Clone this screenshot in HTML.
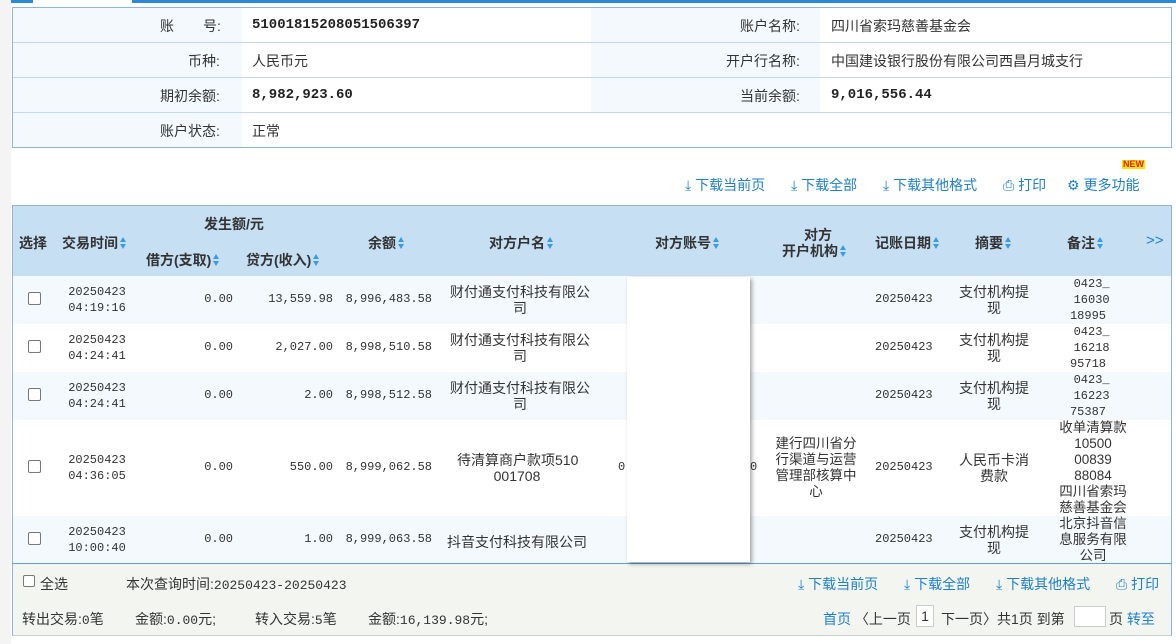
<!DOCTYPE html>
<html><head><meta charset="utf-8"><style>
*{margin:0;padding:0;box-sizing:border-box}
body{width:1176px;height:644px;background:#fff;font-family:"Liberation Sans","WenQuanYi Zen Hei","Noto Sans CJK SC",sans-serif;font-size:14px;color:#333;position:relative;overflow:hidden}
.a{position:absolute;white-space:nowrap}
.mono{font-family:"Liberation Mono","WenQuanYi Zen Hei",monospace;font-size:12px}
.b{color:#1e7fd0}
.th{font-weight:bold;color:#333;font-size:14px}
.s{display:inline-block;width:6px;height:12px;vertical-align:-1px;margin-left:2px;position:relative}
.s:before,.s:after{content:"";position:absolute;left:0;border-left:3px solid transparent;border-right:3px solid transparent}
.s:before{top:0;border-bottom:5px solid #3b9be0}
.s:after{bottom:0;border-top:5px solid #3b9be0}
.cb{position:absolute;width:13px;height:13px;border:1px solid #777;border-radius:2px;background:#fff}
.c{text-align:center;line-height:16px}
.r{text-align:right}
.v{font-size:14px;font-weight:bold;color:#222}
.ft .mono{font-size:13px}
</style></head><body>
<div class="a" style="left:0;top:0;width:11px;height:644px;background:#f4f4f4"></div>
<div class="a" style="left:11px;top:0;width:22px;height:3px;background:#2b8ad6"></div>
<div class="a" style="left:132px;top:0;width:1044px;height:3px;background:#2b8ad6"></div>

<div class="a" style="left:12px;top:7px;width:1160px;height:141px;border:1px solid #8fb4de;background:#fff"></div>
<div class="a" style="left:13px;top:8px;width:229px;height:139px;background:#f4f9fd"></div>
<div class="a" style="left:591px;top:8px;width:229px;height:104px;background:#f4f9fd"></div>
<div class="a" style="left:13px;top:42px;width:1158px;height:1px;background:#c5d9ee"></div>
<div class="a" style="left:13px;top:77px;width:1158px;height:1px;background:#c5d9ee"></div>
<div class="a" style="left:13px;top:112px;width:1158px;height:1px;background:#c5d9ee"></div>
<div class="a" style="left:160px;top:16px">账</div>
<div class="a" style="left:203px;top:16px">号:</div>
<div class="a mono v" style="left:252px;top:17px">51001815208051506397</div>
<div class="a" style="left:188px;top:51px">币种:</div>
<div class="a" style="left:252px;top:51px">人民币元</div>
<div class="a" style="left:160px;top:86px">期初余额:</div>
<div class="a mono v" style="left:252px;top:87px">8,982,923.60</div>
<div class="a" style="left:160px;top:121px">账户状态:</div>
<div class="a" style="left:252px;top:121px">正常</div>
<div class="a" style="left:740px;top:16px">账户名称:</div>
<div class="a" style="left:831px;top:16px">四川省索玛慈善基金会</div>
<div class="a" style="left:726px;top:51px">开户行名称:</div>
<div class="a" style="left:831px;top:51px">中国建设银行股份有限公司西昌月城支行</div>
<div class="a" style="left:740px;top:86px">当前余额:</div>
<div class="a mono v" style="left:831px;top:87px">9,016,556.44</div>

<div class="a b" style="left:685px;top:175px">⤓ 下载当前页</div>
<div class="a b" style="left:791px;top:175px">⤓ 下载全部</div>
<div class="a b" style="left:883px;top:175px">⤓ 下载其他格式</div>
<div class="a b" style="left:1003px;top:175px">⎙ 打印</div>
<div class="a b" style="left:1067px;top:175px">⚙ 更多功能</div>
<div class="a" style="left:1122px;top:160px;font-size:9px;font-weight:bold;color:#e02020;background:#ffe000;line-height:9px;padding:0 1px">NEW</div>

<div class="a" style="left:12px;top:205px;width:1160px;height:431px;border:1px solid #8fb4de;border-bottom:1px solid #ccc"></div>
<div class="a" style="left:13px;top:206px;width:1158px;height:70px;background:#c6dff3"></div>
<div class="a" style="left:13px;top:276px;width:1158px;height:48px;background:#f4f9fd"></div>
<div class="a" style="left:13px;top:372px;width:1158px;height:48px;background:#f4f9fd"></div>
<div class="a" style="left:13px;top:516px;width:1158px;height:48px;background:#f4f9fd"></div>
<div class="a" style="left:12px;top:563px;width:1160px;height:1px;background:#5aa0e0"></div>
<div class="a" style="left:13px;top:564px;width:1158px;height:71px;background:#f3f6f0"></div>

<div class="a th" style="left:19px;top:233px">选择</div>
<div class="a th" style="left:62px;top:233px">交易时间<span class="s"></span></div>
<div class="a th" style="left:204px;top:214px">发生额/元</div>
<div class="a th" style="left:146px;top:250px">借方(支取)<span class="s"></span></div>
<div class="a th" style="left:246px;top:250px">贷方(收入)<span class="s"></span></div>
<div class="a th" style="left:368px;top:233px">余额<span class="s"></span></div>
<div class="a th" style="left:489px;top:233px">对方户名<span class="s"></span></div>
<div class="a th" style="left:655px;top:233px">对方账号<span class="s"></span></div>
<div class="a th" style="left:804px;top:225px">对方</div>
<div class="a th" style="left:782px;top:241px">开户机构<span class="s"></span></div>
<div class="a th" style="left:875px;top:233px">记账日期<span class="s"></span></div>
<div class="a th" style="left:975px;top:233px">摘要<span class="s"></span></div>
<div class="a th" style="left:1067px;top:233px">备注<span class="s"></span></div>
<div class="a b" style="left:1146px;top:232px;font-size:15px">&gt;&gt;</div>

<div class="cb" style="left:28px;top:292px"></div>
<div class="a mono c" style="left:60px;top:284px;width:74px">20250423<br>04:19:16</div>
<div class="a mono r" style="left:160px;top:292px;width:73px">0.00</div>
<div class="a mono r" style="left:250px;top:292px;width:83px">13,559.98</div>
<div class="a mono r" style="left:340px;top:292px;width:92px">8,996,483.58</div>
<div class="a c" style="left:447px;top:284px;width:146px;white-space:normal">财付通支付科技有限公司</div>
<div class="a mono" style="left:875px;top:292px">20250423</div>
<div class="a c" style="left:958px;top:284px;width:72px;white-space:normal">支付机构提现</div>
<div class="a mono c" style="left:1058px;top:276px;width:60px">&nbsp;0423_<br>&nbsp;16030<br>18995</div>

<div class="cb" style="left:28px;top:340px"></div>
<div class="a mono c" style="left:60px;top:332px;width:74px">20250423<br>04:24:41</div>
<div class="a mono r" style="left:160px;top:340px;width:73px">0.00</div>
<div class="a mono r" style="left:250px;top:340px;width:83px">2,027.00</div>
<div class="a mono r" style="left:340px;top:340px;width:92px">8,998,510.58</div>
<div class="a c" style="left:447px;top:332px;width:146px;white-space:normal">财付通支付科技有限公司</div>
<div class="a mono" style="left:875px;top:340px">20250423</div>
<div class="a c" style="left:958px;top:332px;width:72px;white-space:normal">支付机构提现</div>
<div class="a mono c" style="left:1058px;top:324px;width:60px">&nbsp;0423_<br>&nbsp;16218<br>95718</div>

<div class="cb" style="left:28px;top:388px"></div>
<div class="a mono c" style="left:60px;top:380px;width:74px">20250423<br>04:24:41</div>
<div class="a mono r" style="left:160px;top:388px;width:73px">0.00</div>
<div class="a mono r" style="left:250px;top:388px;width:83px">2.00</div>
<div class="a mono r" style="left:340px;top:388px;width:92px">8,998,512.58</div>
<div class="a c" style="left:447px;top:380px;width:146px;white-space:normal">财付通支付科技有限公司</div>
<div class="a mono" style="left:875px;top:388px">20250423</div>
<div class="a c" style="left:958px;top:380px;width:72px;white-space:normal">支付机构提现</div>
<div class="a mono c" style="left:1058px;top:372px;width:60px">&nbsp;0423_<br>&nbsp;16223<br>75387</div>

<div class="cb" style="left:28px;top:460px"></div>
<div class="a mono c" style="left:60px;top:452px;width:74px">20250423<br>04:36:05</div>
<div class="a mono r" style="left:160px;top:460px;width:73px">0.00</div>
<div class="a mono r" style="left:250px;top:460px;width:83px">550.00</div>
<div class="a mono r" style="left:340px;top:460px;width:92px">8,999,062.58</div>
<div class="a c" style="left:457px;top:452px;width:120px">待清算商户款项510<br>001708</div>
<div class="a mono" style="left:618px;top:460px">0:</div>
<div class="a mono" style="left:750px;top:460px">0</div>
<div class="a c" style="left:772px;top:436px;width:88px;white-space:normal;font-size:13.5px">建行四川省分行渠道与运营管理部核算中心</div>
<div class="a mono" style="left:875px;top:460px">20250423</div>
<div class="a c" style="left:958px;top:452px;width:72px;white-space:normal">人民币卡消费款</div>
<div class="a c" style="left:1043px;top:420px;width:100px;font-size:13.5px">收单清算款<br>10500<br>00839<br>88084<br>四川省索玛<br>慈善基金会</div>

<div class="cb" style="left:28px;top:532px"></div>
<div class="a mono c" style="left:60px;top:524px;width:74px">20250423<br>10:00:40</div>
<div class="a mono r" style="left:160px;top:532px;width:73px">0.00</div>
<div class="a mono r" style="left:250px;top:532px;width:83px">1.00</div>
<div class="a mono r" style="left:340px;top:532px;width:92px">8,999,063.58</div>
<div class="a" style="left:447px;top:532px">抖音支付科技有限公司</div>
<div class="a mono" style="left:875px;top:532px">20250423</div>
<div class="a c" style="left:958px;top:524px;width:72px;white-space:normal">支付机构提现</div>
<div class="a c" style="left:1043px;top:516px;width:100px;font-size:13.5px">北京抖音信<br>息服务有限<br>公司</div>

<div class="a" style="left:627px;top:277px;width:123px;height:285px;background:#fff;box-shadow:2px 2px 4px rgba(0,0,0,.35)"></div>

<div class="ft">
<div class="cb" style="left:23px;top:575px;width:12px;height:12px"></div>
<div class="a" style="left:40px;top:574px">全选</div>
<div class="a" style="left:126px;top:574px">本次查询时间:<span class="mono">20250423-20250423</span></div>
<div class="a b" style="left:798px;top:574px">⤓ 下载当前页</div>
<div class="a b" style="left:904px;top:574px">⤓ 下载全部</div>
<div class="a b" style="left:996px;top:574px">⤓ 下载其他格式</div>
<div class="a b" style="left:1116px;top:574px">⎙ 打印</div>
<div class="a" style="left:22px;top:609px">转出交易:<span class="mono">0</span>笔</div>
<div class="a" style="left:135px;top:609px">金额:<span class="mono">0.00</span>元;</div>
<div class="a" style="left:255px;top:609px">转入交易:<span class="mono">5</span>笔</div>
<div class="a" style="left:368px;top:609px">金额:<span class="mono">16,139.98</span>元;</div>
<div class="a" style="left:823px;top:609px"><span class="b">首页</span> 〈上一页</div>
<div class="a" style="left:916px;top:605px;width:18px;height:22px;border:1px solid #ccc;background:#fff;text-align:center;line-height:20px">1</div>
<div class="a" style="left:941px;top:609px">下一页〉共1页 到第</div>
<div class="a" style="left:1074px;top:606px;width:32px;height:21px;border:1px solid #ccc;background:#fff"></div>
<div class="a" style="left:1109px;top:609px">页 <span class="b">转至</span></div>
</div>
</body></html>
